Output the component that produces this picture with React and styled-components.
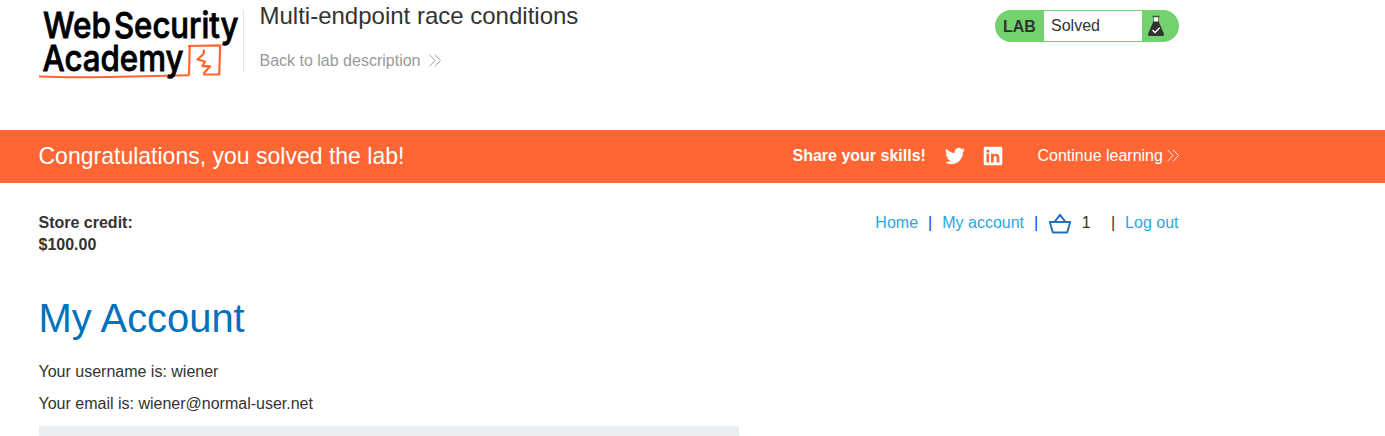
import React from "react";
import styled, { createGlobalStyle } from "styled-components";

const GlobalStyle = createGlobalStyle`
  * { box-sizing: border-box; }
  body {
    margin: 0;
    background: #fff;
    color: #333332;
    font: 16px/22px "Liberation Sans", Arial, sans-serif;
    overflow: hidden;
  }
  h1, h2, h4, p { margin: 0; font-weight: 400; }
  a { text-decoration: none; }
`;

const Page = styled.div`
  height: 436px;
  overflow: hidden;
`;

const Container = styled.div`
  width: 1140px;
  margin-left: 38.5px;
  display: flex;
  align-items: ${(p) => p.$align || "flex-start"};
`;

const Header = styled.header`
  height: 130px;
  padding-top: 10px;
`;

const Logo = styled.svg`
  display: block;
  width: 204px;
  height: 76px;
  flex: none;
  overflow: visible;
`;

const TitleBlock = styled.div`
  height: 62px;
  border-left: 1px solid #e4e4e4;
  padding-left: 16px;
  flex: 1;
`;

const Title = styled.h2`
  font-size: 24px;
  line-height: 28px;
  margin-top: -8px;
`;

const BackLink = styled.a`
  display: flex;
  align-items: center;
  gap: 8.5px;
  margin-top: 20px;
  color: #999;

  svg { margin-top: -2px; }
`;

const Status = styled.div`
  display: flex;
  width: 184px;
  height: 32px;
  padding: 1px 0;
  border-radius: 16px;
  background: #72d26d;
  line-height: 30px;
`;

const StatusLabel = styled.b`
  width: 49px;
  padding-left: 8.4px;
  line-height: 32px;
`;

const StatusValue = styled.span`
  width: 98px;
  padding-left: 7.5px;
  background: #fff;
`;

const Flask = styled.svg`
  width: 16px;
  height: 22px;
  margin: 4px 0 0 6px;
`;

const Banner = styled.section`
  background: #ff6633;
  color: #fff;
  height: 53px;
  padding-bottom: 2px;
  display: flex;
`;

const Congrats = styled.h4`
  font-size: 23.03px;
  flex: 1;
`;

const SocialIcon = styled.svg`
  width: 20px;
  height: 20px;
  margin: 1px 0 0 ${(p) => p.$gap}px;
  fill: #fff;
`;

const ContinueLink = styled.a`
  display: flex;
  align-items: center;
  gap: 3.6px;
  margin-left: 34.6px;
`;

const Chevrons = styled.svg`
  width: 12px;
  height: 13px;
  fill: none;
  stroke: currentColor;
  stroke-width: 0.9;
`;

const StoreBar = styled.div`
  padding-top: 29px;
  height: 112px;
`;

const Credit = styled.b`
  flex: 1;
`;

const Nav = styled.nav`
  display: flex;
  align-items: center;
`;

const NavLink = styled.a`
  color: #29a7df;
`;

const Divider = styled.span`
  margin: 0 10px;
  width: 4.16px;
  color: ${(p) => p.$color || "#333332"};
`;

const Basket = styled.svg`
  width: 24px;
  height: 22px;
  fill: none;
  stroke: #2670b8;
  stroke-width: 2;
  stroke-linejoin: round;
`;

const Count = styled.span`
  margin: 0 10.2px 0 9.700px;
`;

const Account = styled.main`
  width: 700px;
  margin-left: 38.5px;
`;

const Heading = styled.h1`
  font-size: 39.900px;
  line-height: 46px;
  color: #0071bc;
`;

const Details = styled.div`
  display: grid;
  gap: 10px;
  padding-top: 20px;
`;

const FormPanel = styled.div`
  height: 40px;
  margin-top: 11px;
  background: #eaeff2;
`;

const LogoText = styled.text`
  font: 500 35.5px Inter, sans-serif;
  fill: #000;
  stroke: #000;
  stroke-width: 0.8;
`;

function DoubleChevron() {
  return (
    <Chevrons viewBox="0 0 12 13">
      <path d="M.5.7 6 6.5.5 12.3M6 .7l5.5 5.8L6 12.3" />
    </Chevrons>
  );
}

function AcademyLogo() {
  return (
    <Logo viewBox="38.5 10 204 76" aria-label="Web Security Academy">
      <LogoText x="42.500" y="38" textLength="68" lengthAdjust="spacingAndGlyphs">Web</LogoText>
      <LogoText x="113.500" y="38" textLength="124.500" lengthAdjust="spacingAndGlyphs">Security</LogoText>
      <path d="M38.500 76.500Q68 77.800 108 77T188.500 75.300" fill="none" stroke="#ff6633" strokeWidth="2" />
      <path d="M188.500 75.500 189.200 46.500M187.500 46 219.700 45.400 218.700 74.300 202.500 74.500" fill="none" stroke="#ff6633" strokeWidth="2.200" strokeLinejoin="round" />
      <path d="M203.500 49.500 203 54 197 59.500 204.500 61.500 202 66 209.500 66.500 203 73.500" fill="none" stroke="#ff6633" strokeWidth="2.300" strokeLinejoin="round" />
      <LogoText x="42" y="70.600" textLength="141" lengthAdjust="spacingAndGlyphs">Academy</LogoText>
    </Logo>
  );
}

export default function App() {
  return (
    <Page>
      <GlobalStyle />
      <Header>
        <Container>
          <AcademyLogo />
          <TitleBlock>
            <Title>Multi-endpoint race conditions</Title>
            <BackLink>
              Back to lab description <DoubleChevron />
            </BackLink>
          </TitleBlock>
          <Status>
            <StatusLabel>LAB</StatusLabel>
            <StatusValue>Solved</StatusValue>
            <Flask viewBox="0 0 16 22">
              <path d="M5.500 2.500h5V7h-5z" fill="#fff" />
              <path d="M4.500 1.300h7" stroke="#333332" strokeWidth="1" />
              <path d="M5.500 1.500V7M10.500 1.500V7" stroke="#333332" strokeWidth=".6" />
              <path d="M5.300 6.500h5.400L16 19q.3 2-1.500 2h-13Q-.3 21 0 19Z" fill="#333332" />
              <path d="m4.500 15 2.500 2.500 4.700-4.700" fill="none" stroke="#fff" strokeWidth="1.300" />
            </Flask>
          </Status>
        </Container>
      </Header>
      <Banner>
        <Container $align="center">
          <Congrats>Congratulations, you solved the lab!</Congrats>
          <b>Share your skills!</b>
          <SocialIcon $gap={19} viewBox="0 0 24 24">
            <path d="M23.950 4.570a10 10 0 0 1-2.820.77 4.960 4.960 0 0 0 2.160-2.720c-.95.55-2 .95-3.130 1.180a4.920 4.920 0 0 0-8.380 4.480C7.690 8.090 4.070 6.130 1.640 3.160a4.920 4.920 0 0 0 1.520 6.570 4.900 4.900 0 0 1-2.230-.61v.06a4.920 4.920 0 0 0 3.950 4.830 5 5 0 0 1-2.210.08 4.940 4.940 0 0 0 4.600 3.420A9.870 9.870 0 0 1 0 19.540a14 14 0 0 0 7.550 2.210c9.050 0 14-7.500 14-13.990 0-.21 0-.42-.02-.63a9.900 9.900 0 0 0 2.420-2.560Z" />
          </SocialIcon>
          <SocialIcon $gap={18} viewBox="0 0 20 20">
            <path fillRule="evenodd" d="M2 .7h16q1.300 0 1.300 1.300v16q0 1.300-1.300 1.300H2Q.7 19.300.7 18V2Q.7.700 2 .7ZM3.500 7.800v8.700h2.700V7.800ZM4.850 3.500a1.600 1.600 0 1 0 0 3.200 1.600 1.600 0 0 0 0-3.200ZM8 7.800v8.700h2.700v-4.600c0-2.400 2.900-2.400 2.900 0v4.600h2.800v-5.200c0-4.200-4.400-4.400-5.700-2.200V7.800Z" />
          </SocialIcon>
          <ContinueLink>
            Continue learning <DoubleChevron />
          </ContinueLink>
        </Container>
      </Banner>
      <StoreBar>
        <Container>
          <Credit>Store credit:<br />$100.00</Credit>
          <Nav>
            <NavLink>Home</NavLink>
            <Divider $color="#1b4a9c">|</Divider>
            <NavLink>My account</NavLink>
            <Divider $color="#1b4a9c">|</Divider>
            <Basket viewBox="0 0 24 22">
              <path d="M1.800 10h20.400l-3 10.500H4.800ZM6.800 9.500 12 2.800l5.200 6.700" />
            </Basket>
            <Count>1</Count>
            <Divider>|</Divider>
            <NavLink>Log out</NavLink>
          </Nav>
        </Container>
      </StoreBar>
      <Account>
        <Heading>My Account</Heading>
        <Details>
          <p>Your username is: wiener</p>
          <p>Your email is: wiener@normal-user.net</p>
        </Details>
        <FormPanel />
      </Account>
    </Page>
  );
}
